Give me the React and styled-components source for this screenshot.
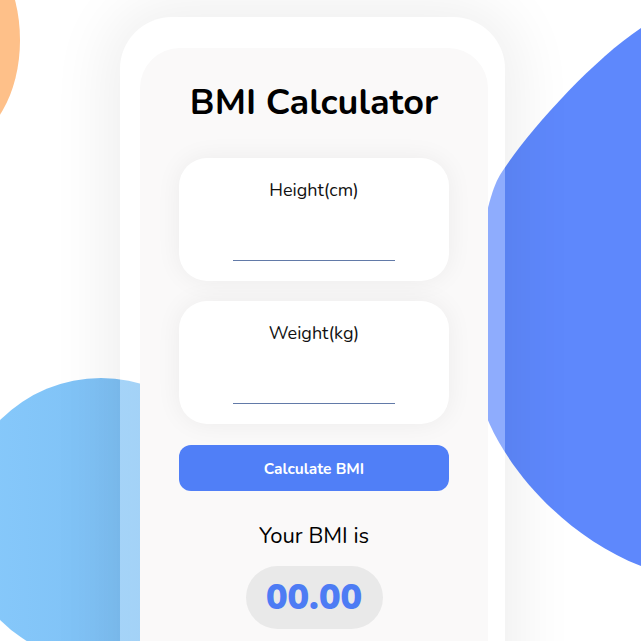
import React, { useState } from 'react';
import styled, { createGlobalStyle } from 'styled-components';

const blue = '#5e88fc';
const accent = '#507ff7';

const GlobalStyle = createGlobalStyle`
  html, body {
    margin: 0;
    padding: 0;
    background: #ffffff;
    overflow: hidden;
  }
  * {
    box-sizing: border-box;
  }
`;

const Page = styled.div`
  position: relative;
  width: 100vw;
  height: 100vh;
  overflow: hidden;
  padding: 17px 0 0 120px;
  font-family: "Nunito", "Lato", "Open Sans", sans-serif;
`;

const Backdrop = styled.svg`
  position: absolute;
  top: 0;
  left: 0;
  width: 641px;
  height: 641px;
`;

const Frame = styled.div`
  position: relative;
  z-index: 1;
  width: 385px;
  height: 720px;
  padding: 31px 17px 0 20px;
  border-radius: 52px;
  background: rgba(255, 255, 255, 0.3);
  box-shadow: 0 0 60px 14px rgba(0, 0, 0, 0.065);
`;

const Panel = styled.div`
  display: flex;
  flex-direction: column;
  align-items: center;
  height: 100%;
  padding: 29px 39px 0 39px;
  border-radius: 40px;
  background: #faf9f9;
`;

const Title = styled.h1`
  margin: 0 0 29px 0;
  font-size: 36px;
  font-weight: 700;
  line-height: 52px;
  color: #000;
`;

const Card = styled.div`
  display: flex;
  flex-direction: column;
  align-items: center;
  width: 270px;
  height: 123px;
  margin-bottom: 20px;
  padding-top: 21px;
  border-radius: 28px;
  background: #ffffff;
  box-shadow: 0 0 26px rgba(0, 0, 0, 0.06);
`;

const Label = styled.label`
  font-size: 18px;
  line-height: 22px;
  color: #111;
`;

const Field = styled.input`
  width: 162px;
  margin-top: 33px;
  padding: 0 0 4px 0;
  border: none;
  border-bottom: 1px solid #627aa8;
  background: transparent;
  font-family: inherit;
  font-size: 16px;
  text-align: center;
  outline: none;
`;

const Button = styled.button`
  width: 270px;
  height: 46px;
  margin-top: 1px;
  border: none;
  border-radius: 12px;
  background: ${accent};
  color: #ffffff;
  font-family: inherit;
  font-size: 15.5px;
  font-weight: 700;
  cursor: pointer;
`;

const ResultLabel = styled.p`
  margin: 30px 0 15px 0;
  font-size: 22px;
  line-height: 30px;
  color: #000;
`;

const Score = styled.div`
  display: flex;
  align-items: center;
  justify-content: center;
  width: 137px;
  height: 63px;
  border-radius: 32px;
  background: #e9e9e9;
  color: #4d7cf4;
  font-size: 36px;
  font-weight: 900;
`;

const Blobs = () => (
  <Backdrop viewBox="0 0 641 641">
    <defs>
      <linearGradient id="sky" x1="0" x2="1" y1="0" y2="0">
        <stop offset="0" stopColor="#88cafc" />
        <stop offset="1" stopColor="#76b9ef" />
      </linearGradient>
    </defs>
    <ellipse cx="-40" cy="40" rx="60" ry="100" fill="#fec089" />
    <circle cx="101" cy="520" r="142" fill="url(#sky)" />
    <path
      d="M 641 28 C 590 62 525 135 500 175 C 482 205 470 300 478 390 C 492 455 560 535 641 566 L 700 566 L 700 28 Z"
      fill={blue}
    />
  </Backdrop>
);

const InputCard = ({ label, value, onChange }) => (
  <Card>
    <Label>{label}</Label>
    <Field type="text" value={value} onChange={(e) => onChange(e.target.value)} />
  </Card>
);

const App = () => {
  const [height, setHeight] = useState('');
  const [weight, setWeight] = useState('');
  const [bmi, setBmi] = useState('00.00');

  const calculate = () => {
    const h = parseFloat(height) / 100;
    const w = parseFloat(weight);
    if (h > 0 && w > 0) setBmi((w / (h * h)).toFixed(2));
  };

  return (
    <Page>
      <GlobalStyle />
      <Blobs />
      <Frame>
        <Panel>
          <Title>BMI Calculator</Title>
          <InputCard label="Height(cm)" value={height} onChange={setHeight} />
          <InputCard label="Weight(kg)" value={weight} onChange={setWeight} />
          <Button onClick={calculate}>Calculate BMI</Button>
          <ResultLabel>Your BMI is</ResultLabel>
          <Score>{bmi}</Score>
        </Panel>
      </Frame>
    </Page>
  );
};

export default App;
